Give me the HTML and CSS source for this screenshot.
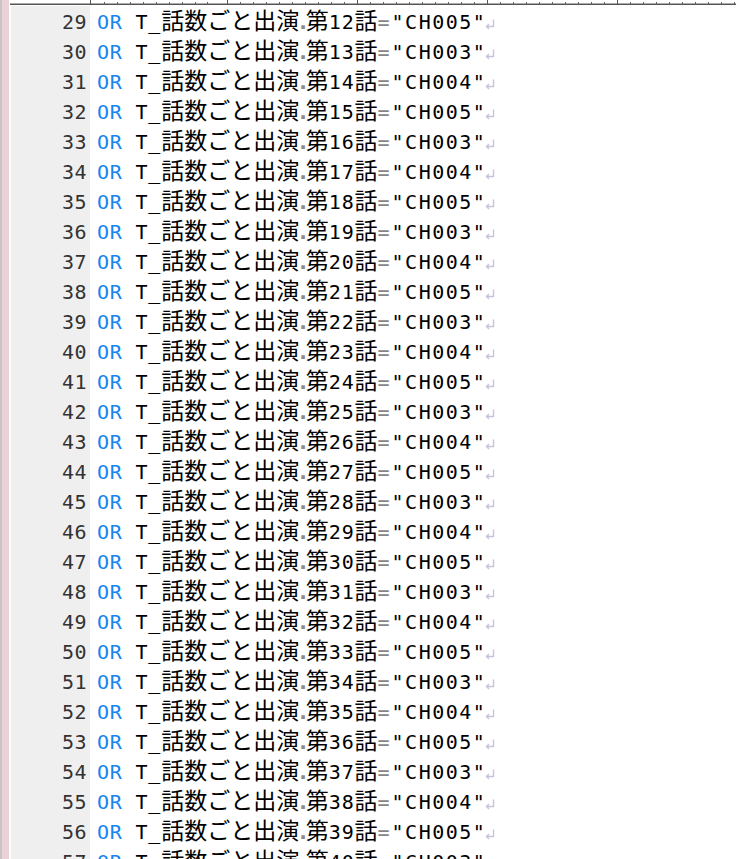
FILE: index.html
```html
<!DOCTYPE html>
<html lang="ja">
<head>
<meta charset="utf-8">
<title>Editor</title>
<link rel="stylesheet" href="styles.css">
</head>
<body>
<div class="window">
  <div class="side"></div>
  <div class="main">
    <svg class="ruler" width="726" height="6" viewBox="0 0 726 6">
      <line x1="0" y1="4.25" x2="726" y2="4.25" stroke="#555" stroke-width="1.5"/>
      <g stroke="#555" stroke-width="1">
        <line x1="80.5" y1="0" x2="80.5" y2="4"/>
        <line x1="217.5" y1="0" x2="217.5" y2="4"/>
        <line x1="347.5" y1="0" x2="347.5" y2="4"/>
        <line x1="477.5" y1="0" x2="477.5" y2="4"/>
        <line x1="607.5" y1="0" x2="607.5" y2="4"/>
      </g>
      <g stroke="#666" stroke-width="1">
        <line x1="94.5" y1="2" x2="94.5" y2="4"/><line x1="107.5" y1="2" x2="107.5" y2="4"/><line x1="120.5" y1="2" x2="120.5" y2="4"/><line x1="133.5" y1="2" x2="133.5" y2="4"/><line x1="146.5" y1="2" x2="146.5" y2="4"/><line x1="159.5" y1="2" x2="159.5" y2="4"/><line x1="172.5" y1="2" x2="172.5" y2="4"/><line x1="185.5" y1="2" x2="185.5" y2="4"/><line x1="197.5" y1="2" x2="197.5" y2="4"/>
        <line x1="230.5" y1="2" x2="230.5" y2="4"/><line x1="243.5" y1="2" x2="243.5" y2="4"/><line x1="256.5" y1="2" x2="256.5" y2="4"/><line x1="269.5" y1="2" x2="269.5" y2="4"/><line x1="282.5" y1="2" x2="282.5" y2="4"/><line x1="295.5" y1="2" x2="295.5" y2="4"/><line x1="308.5" y1="2" x2="308.5" y2="4"/><line x1="321.5" y1="2" x2="321.5" y2="4"/><line x1="334.5" y1="2" x2="334.5" y2="4"/>
        <line x1="360.5" y1="2" x2="360.5" y2="4"/><line x1="373.5" y1="2" x2="373.5" y2="4"/><line x1="386.5" y1="2" x2="386.5" y2="4"/><line x1="399.5" y1="2" x2="399.5" y2="4"/><line x1="412.5" y1="2" x2="412.5" y2="4"/><line x1="425.5" y1="2" x2="425.5" y2="4"/><line x1="438.5" y1="2" x2="438.5" y2="4"/><line x1="451.5" y1="2" x2="451.5" y2="4"/><line x1="464.5" y1="2" x2="464.5" y2="4"/>
        <line x1="490.5" y1="2" x2="490.5" y2="4"/><line x1="503.5" y1="2" x2="503.5" y2="4"/><line x1="516.5" y1="2" x2="516.5" y2="4"/><line x1="529.5" y1="2" x2="529.5" y2="4"/><line x1="542.5" y1="2" x2="542.5" y2="4"/><line x1="555.5" y1="2" x2="555.5" y2="4"/><line x1="568.5" y1="2" x2="568.5" y2="4"/><line x1="581.5" y1="2" x2="581.5" y2="4"/><line x1="594.5" y1="2" x2="594.5" y2="4"/>
        <line x1="620.5" y1="2" x2="620.5" y2="4"/><line x1="633.5" y1="2" x2="633.5" y2="4"/><line x1="646.5" y1="2" x2="646.5" y2="4"/><line x1="659.5" y1="2" x2="659.5" y2="4"/><line x1="672.5" y1="2" x2="672.5" y2="4"/><line x1="685.5" y1="2" x2="685.5" y2="4"/><line x1="698.5" y1="2" x2="698.5" y2="4"/><line x1="711.5" y1="2" x2="711.5" y2="4"/><line x1="724.5" y1="2" x2="724.5" y2="4"/>
      </g>
    </svg>
    <div class="editor">
      <div class="gutter">
        <div class="num">29</div><div class="num">30</div><div class="num">31</div><div class="num">32</div><div class="num">33</div><div class="num">34</div><div class="num">35</div><div class="num">36</div><div class="num">37</div><div class="num">38</div><div class="num">39</div><div class="num">40</div><div class="num">41</div><div class="num">42</div><div class="num">43</div><div class="num">44</div><div class="num">45</div><div class="num">46</div><div class="num">47</div><div class="num">48</div><div class="num">49</div><div class="num">50</div><div class="num">51</div><div class="num">52</div><div class="num">53</div><div class="num">54</div><div class="num">55</div><div class="num">56</div><div class="num">57</div>
      </div>
      <div class="code">
        <div class="line"><span class="kw">OR</span> T_<span class="j">話数ごと出演</span><span class="dot">.</span><span class="j">第</span>12<span class="j">話</span><span class="eq">=</span><span class="str">"CH005"</span><svg class="ret" width="10" height="11" viewBox="0 0 10 11"><path d="M8.5 0.5V7.5H1.5M4 5L1.5 7.5L4 10" fill="none" stroke="#c8c2da" stroke-width="1.4"/></svg></div>
        <div class="line"><span class="kw">OR</span> T_<span class="j">話数ごと出演</span><span class="dot">.</span><span class="j">第</span>13<span class="j">話</span><span class="eq">=</span><span class="str">"CH003"</span><svg class="ret" width="10" height="11" viewBox="0 0 10 11"><path d="M8.5 0.5V7.5H1.5M4 5L1.5 7.5L4 10" fill="none" stroke="#c8c2da" stroke-width="1.4"/></svg></div>
        <div class="line"><span class="kw">OR</span> T_<span class="j">話数ごと出演</span><span class="dot">.</span><span class="j">第</span>14<span class="j">話</span><span class="eq">=</span><span class="str">"CH004"</span><svg class="ret" width="10" height="11" viewBox="0 0 10 11"><path d="M8.5 0.5V7.5H1.5M4 5L1.5 7.5L4 10" fill="none" stroke="#c8c2da" stroke-width="1.4"/></svg></div>
        <div class="line"><span class="kw">OR</span> T_<span class="j">話数ごと出演</span><span class="dot">.</span><span class="j">第</span>15<span class="j">話</span><span class="eq">=</span><span class="str">"CH005"</span><svg class="ret" width="10" height="11" viewBox="0 0 10 11"><path d="M8.5 0.5V7.5H1.5M4 5L1.5 7.5L4 10" fill="none" stroke="#c8c2da" stroke-width="1.4"/></svg></div>
        <div class="line"><span class="kw">OR</span> T_<span class="j">話数ごと出演</span><span class="dot">.</span><span class="j">第</span>16<span class="j">話</span><span class="eq">=</span><span class="str">"CH003"</span><svg class="ret" width="10" height="11" viewBox="0 0 10 11"><path d="M8.5 0.5V7.5H1.5M4 5L1.5 7.5L4 10" fill="none" stroke="#c8c2da" stroke-width="1.4"/></svg></div>
        <div class="line"><span class="kw">OR</span> T_<span class="j">話数ごと出演</span><span class="dot">.</span><span class="j">第</span>17<span class="j">話</span><span class="eq">=</span><span class="str">"CH004"</span><svg class="ret" width="10" height="11" viewBox="0 0 10 11"><path d="M8.5 0.5V7.5H1.5M4 5L1.5 7.5L4 10" fill="none" stroke="#c8c2da" stroke-width="1.4"/></svg></div>
        <div class="line"><span class="kw">OR</span> T_<span class="j">話数ごと出演</span><span class="dot">.</span><span class="j">第</span>18<span class="j">話</span><span class="eq">=</span><span class="str">"CH005"</span><svg class="ret" width="10" height="11" viewBox="0 0 10 11"><path d="M8.5 0.5V7.5H1.5M4 5L1.5 7.5L4 10" fill="none" stroke="#c8c2da" stroke-width="1.4"/></svg></div>
        <div class="line"><span class="kw">OR</span> T_<span class="j">話数ごと出演</span><span class="dot">.</span><span class="j">第</span>19<span class="j">話</span><span class="eq">=</span><span class="str">"CH003"</span><svg class="ret" width="10" height="11" viewBox="0 0 10 11"><path d="M8.5 0.5V7.5H1.5M4 5L1.5 7.5L4 10" fill="none" stroke="#c8c2da" stroke-width="1.4"/></svg></div>
        <div class="line"><span class="kw">OR</span> T_<span class="j">話数ごと出演</span><span class="dot">.</span><span class="j">第</span>20<span class="j">話</span><span class="eq">=</span><span class="str">"CH004"</span><svg class="ret" width="10" height="11" viewBox="0 0 10 11"><path d="M8.5 0.5V7.5H1.5M4 5L1.5 7.5L4 10" fill="none" stroke="#c8c2da" stroke-width="1.4"/></svg></div>
        <div class="line"><span class="kw">OR</span> T_<span class="j">話数ごと出演</span><span class="dot">.</span><span class="j">第</span>21<span class="j">話</span><span class="eq">=</span><span class="str">"CH005"</span><svg class="ret" width="10" height="11" viewBox="0 0 10 11"><path d="M8.5 0.5V7.5H1.5M4 5L1.5 7.5L4 10" fill="none" stroke="#c8c2da" stroke-width="1.4"/></svg></div>
        <div class="line"><span class="kw">OR</span> T_<span class="j">話数ごと出演</span><span class="dot">.</span><span class="j">第</span>22<span class="j">話</span><span class="eq">=</span><span class="str">"CH003"</span><svg class="ret" width="10" height="11" viewBox="0 0 10 11"><path d="M8.5 0.5V7.5H1.5M4 5L1.5 7.5L4 10" fill="none" stroke="#c8c2da" stroke-width="1.4"/></svg></div>
        <div class="line"><span class="kw">OR</span> T_<span class="j">話数ごと出演</span><span class="dot">.</span><span class="j">第</span>23<span class="j">話</span><span class="eq">=</span><span class="str">"CH004"</span><svg class="ret" width="10" height="11" viewBox="0 0 10 11"><path d="M8.5 0.5V7.5H1.5M4 5L1.5 7.5L4 10" fill="none" stroke="#c8c2da" stroke-width="1.4"/></svg></div>
        <div class="line"><span class="kw">OR</span> T_<span class="j">話数ごと出演</span><span class="dot">.</span><span class="j">第</span>24<span class="j">話</span><span class="eq">=</span><span class="str">"CH005"</span><svg class="ret" width="10" height="11" viewBox="0 0 10 11"><path d="M8.5 0.5V7.5H1.5M4 5L1.5 7.5L4 10" fill="none" stroke="#c8c2da" stroke-width="1.4"/></svg></div>
        <div class="line"><span class="kw">OR</span> T_<span class="j">話数ごと出演</span><span class="dot">.</span><span class="j">第</span>25<span class="j">話</span><span class="eq">=</span><span class="str">"CH003"</span><svg class="ret" width="10" height="11" viewBox="0 0 10 11"><path d="M8.5 0.5V7.5H1.5M4 5L1.5 7.5L4 10" fill="none" stroke="#c8c2da" stroke-width="1.4"/></svg></div>
        <div class="line"><span class="kw">OR</span> T_<span class="j">話数ごと出演</span><span class="dot">.</span><span class="j">第</span>26<span class="j">話</span><span class="eq">=</span><span class="str">"CH004"</span><svg class="ret" width="10" height="11" viewBox="0 0 10 11"><path d="M8.5 0.5V7.5H1.5M4 5L1.5 7.5L4 10" fill="none" stroke="#c8c2da" stroke-width="1.4"/></svg></div>
        <div class="line"><span class="kw">OR</span> T_<span class="j">話数ごと出演</span><span class="dot">.</span><span class="j">第</span>27<span class="j">話</span><span class="eq">=</span><span class="str">"CH005"</span><svg class="ret" width="10" height="11" viewBox="0 0 10 11"><path d="M8.5 0.5V7.5H1.5M4 5L1.5 7.5L4 10" fill="none" stroke="#c8c2da" stroke-width="1.4"/></svg></div>
        <div class="line"><span class="kw">OR</span> T_<span class="j">話数ごと出演</span><span class="dot">.</span><span class="j">第</span>28<span class="j">話</span><span class="eq">=</span><span class="str">"CH003"</span><svg class="ret" width="10" height="11" viewBox="0 0 10 11"><path d="M8.5 0.5V7.5H1.5M4 5L1.5 7.5L4 10" fill="none" stroke="#c8c2da" stroke-width="1.4"/></svg></div>
        <div class="line"><span class="kw">OR</span> T_<span class="j">話数ごと出演</span><span class="dot">.</span><span class="j">第</span>29<span class="j">話</span><span class="eq">=</span><span class="str">"CH004"</span><svg class="ret" width="10" height="11" viewBox="0 0 10 11"><path d="M8.5 0.5V7.5H1.5M4 5L1.5 7.5L4 10" fill="none" stroke="#c8c2da" stroke-width="1.4"/></svg></div>
        <div class="line"><span class="kw">OR</span> T_<span class="j">話数ごと出演</span><span class="dot">.</span><span class="j">第</span>30<span class="j">話</span><span class="eq">=</span><span class="str">"CH005"</span><svg class="ret" width="10" height="11" viewBox="0 0 10 11"><path d="M8.5 0.5V7.5H1.5M4 5L1.5 7.5L4 10" fill="none" stroke="#c8c2da" stroke-width="1.4"/></svg></div>
        <div class="line"><span class="kw">OR</span> T_<span class="j">話数ごと出演</span><span class="dot">.</span><span class="j">第</span>31<span class="j">話</span><span class="eq">=</span><span class="str">"CH003"</span><svg class="ret" width="10" height="11" viewBox="0 0 10 11"><path d="M8.5 0.5V7.5H1.5M4 5L1.5 7.5L4 10" fill="none" stroke="#c8c2da" stroke-width="1.4"/></svg></div>
        <div class="line"><span class="kw">OR</span> T_<span class="j">話数ごと出演</span><span class="dot">.</span><span class="j">第</span>32<span class="j">話</span><span class="eq">=</span><span class="str">"CH004"</span><svg class="ret" width="10" height="11" viewBox="0 0 10 11"><path d="M8.5 0.5V7.5H1.5M4 5L1.5 7.5L4 10" fill="none" stroke="#c8c2da" stroke-width="1.4"/></svg></div>
        <div class="line"><span class="kw">OR</span> T_<span class="j">話数ごと出演</span><span class="dot">.</span><span class="j">第</span>33<span class="j">話</span><span class="eq">=</span><span class="str">"CH005"</span><svg class="ret" width="10" height="11" viewBox="0 0 10 11"><path d="M8.5 0.5V7.5H1.5M4 5L1.5 7.5L4 10" fill="none" stroke="#c8c2da" stroke-width="1.4"/></svg></div>
        <div class="line"><span class="kw">OR</span> T_<span class="j">話数ごと出演</span><span class="dot">.</span><span class="j">第</span>34<span class="j">話</span><span class="eq">=</span><span class="str">"CH003"</span><svg class="ret" width="10" height="11" viewBox="0 0 10 11"><path d="M8.5 0.5V7.5H1.5M4 5L1.5 7.5L4 10" fill="none" stroke="#c8c2da" stroke-width="1.4"/></svg></div>
        <div class="line"><span class="kw">OR</span> T_<span class="j">話数ごと出演</span><span class="dot">.</span><span class="j">第</span>35<span class="j">話</span><span class="eq">=</span><span class="str">"CH004"</span><svg class="ret" width="10" height="11" viewBox="0 0 10 11"><path d="M8.5 0.5V7.5H1.5M4 5L1.5 7.5L4 10" fill="none" stroke="#c8c2da" stroke-width="1.4"/></svg></div>
        <div class="line"><span class="kw">OR</span> T_<span class="j">話数ごと出演</span><span class="dot">.</span><span class="j">第</span>36<span class="j">話</span><span class="eq">=</span><span class="str">"CH005"</span><svg class="ret" width="10" height="11" viewBox="0 0 10 11"><path d="M8.5 0.5V7.5H1.5M4 5L1.5 7.5L4 10" fill="none" stroke="#c8c2da" stroke-width="1.4"/></svg></div>
        <div class="line"><span class="kw">OR</span> T_<span class="j">話数ごと出演</span><span class="dot">.</span><span class="j">第</span>37<span class="j">話</span><span class="eq">=</span><span class="str">"CH003"</span><svg class="ret" width="10" height="11" viewBox="0 0 10 11"><path d="M8.5 0.5V7.5H1.5M4 5L1.5 7.5L4 10" fill="none" stroke="#c8c2da" stroke-width="1.4"/></svg></div>
        <div class="line"><span class="kw">OR</span> T_<span class="j">話数ごと出演</span><span class="dot">.</span><span class="j">第</span>38<span class="j">話</span><span class="eq">=</span><span class="str">"CH004"</span><svg class="ret" width="10" height="11" viewBox="0 0 10 11"><path d="M8.5 0.5V7.5H1.5M4 5L1.5 7.5L4 10" fill="none" stroke="#c8c2da" stroke-width="1.4"/></svg></div>
        <div class="line"><span class="kw">OR</span> T_<span class="j">話数ごと出演</span><span class="dot">.</span><span class="j">第</span>39<span class="j">話</span><span class="eq">=</span><span class="str">"CH005"</span><svg class="ret" width="10" height="11" viewBox="0 0 10 11"><path d="M8.5 0.5V7.5H1.5M4 5L1.5 7.5L4 10" fill="none" stroke="#c8c2da" stroke-width="1.4"/></svg></div>
        <div class="line"><span class="kw">OR</span> T_<span class="j">話数ごと出演</span><span class="dot">.</span><span class="j">第</span>40<span class="j">話</span><span class="eq">=</span><span class="str">"CH003"</span><svg class="ret" width="10" height="11" viewBox="0 0 10 11"><path d="M8.5 0.5V7.5H1.5M4 5L1.5 7.5L4 10" fill="none" stroke="#c8c2da" stroke-width="1.4"/></svg></div>
      </div>
    </div>
  </div>
</div>
</body>
</html>
```

FILE: styles.css
```css
html, body {
  margin: 0;
  padding: 0;
  background: #ffffff;
  overflow: hidden;
}

.window {
  display: flex;
  width: 736px;
  height: 859px;
  overflow: hidden;
}

.side {
  flex: 0 0 7px;
  background: #ead3d8;
  border-left: 2px solid #c9c4c6;
  border-right: 1px solid #ffffff;
}

.main {
  flex: 1;
  display: flex;
  flex-direction: column;
  min-width: 0;
}

.ruler {
  display: block;
  flex: 0 0 6px;
}

.editor {
  flex: 1;
  display: flex;
  font-family: "DejaVu Sans Mono", "Liberation Mono", monospace;
  font-size: 20px;
  line-height: 30px;
  min-height: 0;
  overflow: hidden;
}

.gutter {
  flex: 0 0 76px;
  margin-left: 1px;
  padding: 1px 3px 0 0;
  background: #efefef;
  color: #333333;
  text-align: right;
  letter-spacing: 0.5px;
}

.num {
  height: 30px;
}

.code {
  flex: 1;
  margin-left: 2px;
  padding: 1px 0 0 5px;
  color: #000000;
}

.line {
  height: 30px;
  white-space: pre;
  letter-spacing: 0.8px;
}

.kw {
  color: #1684f2;
}

.dot {
  font-family: "DejaVu Sans", sans-serif;
  font-weight: bold;
  color: #8a8a8a;
  letter-spacing: -1px;
}

.eq {
  color: #858585;
  letter-spacing: 2px;
}

.str {
  letter-spacing: 1.5px;
}

.j {
  font-family: "Noto Sans CJK JP", sans-serif;
  font-size: 23px;
  letter-spacing: 0;
  line-height: 0;
}

.ret {
  margin-left: -1px;
  vertical-align: -1px;
}
```
